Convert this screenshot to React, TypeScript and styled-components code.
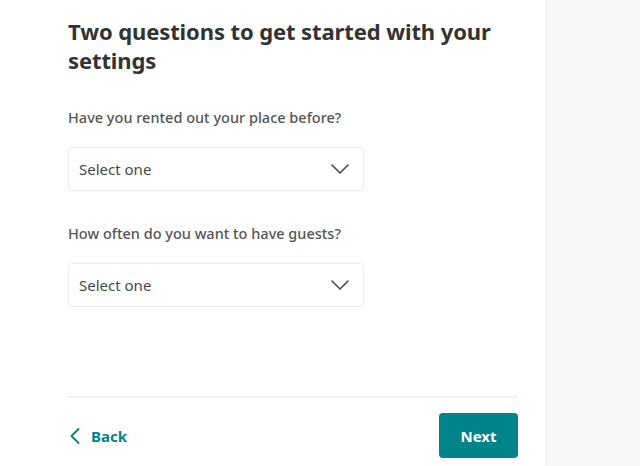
import React from "react";
import styled, { createGlobalStyle } from "styled-components";

const GlobalStyle = createGlobalStyle`
  html, body {
    margin: 0;
    padding: 0;
    background: #ffffff;
  }
  body {
    font-family: "Noto Sans", "Liberation Sans", sans-serif;
    color: #484848;
  }
`;

const questions = [
  { id: "rented", label: "Have you rented out your place before?" },
  { id: "often", label: "How often do you want to have guests?" },
];

const Chevron = ({ dir }: { dir: "down" | "left" }) =>
  dir === "down" ? (
    <svg width="18" height="10" viewBox="0 0 18 10" fill="none">
      <path d="M1 1l8 8 8-8" stroke="#484848" strokeWidth="1.6" strokeLinecap="round" strokeLinejoin="round" />
    </svg>
  ) : (
    <svg width="10" height="16" viewBox="0 0 10 16" fill="none">
      <path d="M8.5 1L1.5 8l7 7" stroke="#008489" strokeWidth="1.8" strokeLinecap="round" strokeLinejoin="round" />
    </svg>
  );

const App = () => {
  return (
    <Page>
      <GlobalStyle />
      <Main>
        <Title>Two questions to get started with your settings</Title>
        {questions.map((q) => (
          <Field key={q.id}>
            <Label>{q.label}</Label>
            <Select>
              <span>Select one</span>
              <Chevron dir="down" />
            </Select>
          </Field>
        ))}
        <Footer>
          <BackLink>
            <Chevron dir="left" />
            Back
          </BackLink>
          <NextButton>Next</NextButton>
        </Footer>
      </Main>
      <Side />
    </Page>
  );
};

export default App;

const Page = styled.div`
  display: flex;
  width: 100%;
  min-height: 466px;
`;

const Main = styled.div`
  width: 450px;
  padding: 17px 27px 0 68px;
`;

const Side = styled.div`
  flex: 1;
  background: #f8f8f8;
  box-shadow: inset 6px 0 6px -4px rgba(0, 0, 0, 0.03);
`;

const Title = styled.h1`
  margin: 0;
  font-size: 22px;
  line-height: 29px;
  font-weight: 700;
  color: #333333;
  letter-spacing: -0.1px;
`;

const Field = styled.div`
  margin-top: 32px;
`;

const Label = styled.div`
  font-size: 14.5px;
  line-height: 20px;
  font-weight: 500;
  color: #565656;
  margin-bottom: 20px;
`;

const Select = styled.div`
  box-sizing: border-box;
  width: 296px;
  height: 44px;
  border: 1px solid #ebebeb;
  border-radius: 4px;
  display: flex;
  align-items: center;
  justify-content: space-between;
  padding: 0 14px 0 10px;
  font-size: 15px;
  color: #484848;
`;

const Footer = styled.div`
  margin-top: 89px;
  border-top: 2px solid #f1f1f1;
  padding-top: 15px;
  display: flex;
  align-items: center;
  justify-content: space-between;
`;

const BackLink = styled.div`
  display: flex;
  align-items: center;
  gap: 11px;
  padding-left: 2px;
  color: #008489;
  font-size: 15px;
  font-weight: 700;
`;

const NextButton = styled.div`
  box-sizing: border-box;
  width: 79px;
  height: 45px;
  border-radius: 4px;
  background: #008489;
  color: #ffffff;
  font-size: 15px;
  font-weight: 700;
  display: flex;
  align-items: center;
  justify-content: center;
`;
